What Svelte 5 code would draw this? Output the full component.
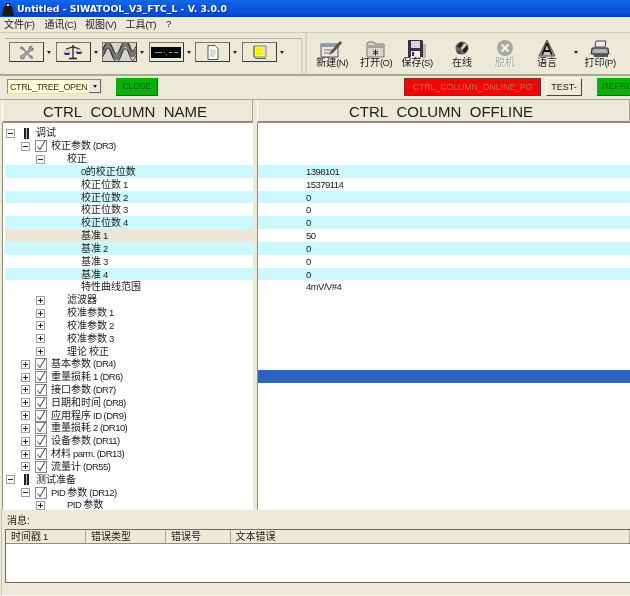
<script>
  // tree rows: l = indent level, t = twisty ("+", "-" or none), i = icon kind
  const rows = [
    { l: 0, t: "-", i: "bars", text: "调试" },
    { l: 1, t: "-", i: "check", text: "校正参数 (DR3)" },
    { l: 2, t: "-", text: "校正" },
    { l: 3, text: "0的校正位数", val: "1398101", c: 1 },
    { l: 3, text: "校正位数 1", val: "15379114" },
    { l: 3, text: "校正位数 2", val: "0", c: 1 },
    { l: 3, text: "校正位数 3", val: "0" },
    { l: 3, text: "校正位数 4", val: "0", c: 1 },
    { l: 3, text: "基准 1", val: "50", sel: 1 },
    { l: 3, text: "基准 2", val: "0", c: 1 },
    { l: 3, text: "基准 3", val: "0" },
    { l: 3, text: "基准 4", val: "0", c: 1 },
    { l: 3, text: "特性曲线范围", val: "4mV/V#4" },
    { l: 2, t: "+", text: "滤波器" },
    { l: 2, t: "+", text: "校准参数 1" },
    { l: 2, t: "+", text: "校准参数 2" },
    { l: 2, t: "+", text: "校准参数 3" },
    { l: 2, t: "+", text: "理论 校正" },
    { l: 1, t: "+", i: "check", text: "基本参数 (DR4)" },
    { l: 1, t: "+", i: "check", text: "重量损耗 1 (DR6)", hi: 1 },
    { l: 1, t: "+", i: "check", text: "接口参数 (DR7)" },
    { l: 1, t: "+", i: "check", text: "日期和时间 (DR8)" },
    { l: 1, t: "+", i: "check", text: "应用程序 ID (DR9)" },
    { l: 1, t: "+", i: "check", text: "重量损耗 2 (DR10)" },
    { l: 1, t: "+", i: "check", text: "设备参数 (DR11)" },
    { l: 1, t: "+", i: "check", text: "材料 parm. (DR13)" },
    { l: 1, t: "+", i: "check", text: "流量计 (DR55)" },
    { l: 0, t: "-", i: "bars", text: "测试准备" },
    { l: 1, t: "-", i: "check", text: "PID 参数 (DR12)" },
    { l: 2, t: "+", text: "PID 参数" },
  ];
  const menus = ["文件(F)", "通讯(C)", "视图(V)", "工具(T)", "?"];
  const leftTools = ["tools", "scale", "wave", "display", "doc", "note"];
  const cols = ["时间戳 1", "错误类型", "错误号", "文本错误"];

  // latin runs are set narrower than the CJK around them
  const parts = (s) => s.split(/([\x00-\x7f]+)/).filter(Boolean);
  const isLatin = (p) => /^[\x00-\x7f]/.test(p);
</script>

{#snippet txt(s)}
  {#each parts(s) as p}<span class:lat={isLatin(p)}>{p}</span>{/each}
{/snippet}

<div class="win">
  <div class="title">
    <svg class="appicon" width="12" height="14" viewBox="0 0 12 14">
      <path d="M4 1h4v3h2l2 10H0L2 4h2z" fill="#1a1a1a" />
      <rect x="5" y="2" width="2" height="2" fill="#ddd" />
    </svg>
    <span>Untitled - SIWATOOL_V3_FTC_L - V. 3.0.0</span>
  </div>

  <div class="menu">
    {#each menus as m}<div class="mi">{@render txt(m)}</div>{/each}
  </div>

  <div class="toolbar">
    <div class="leftband">
      {#each leftTools as k}
        <div class="tool">
          <div class="tbtn">
            {#if k === "tools"}
              <svg width="16" height="15" viewBox="0 0 18 16">
                <path d="M3 1l3 3v2l5 5 2 0 3 3-2 1-3-3v-2L6 5H4L1 3z" fill="#8a8a8a" stroke="#666" stroke-width=".6" />
                <path d="M15 1l-3 .5-.5 3L4 11a2.200 2.200 0 1 0 2 2l7-7 2.500-.5.500-2.500-2 1-1.200-1z" fill="#aaa" stroke="#555" stroke-width=".8" />
              </svg>
            {:else if k === "scale"}
              <svg width="18" height="17" viewBox="0 0 18 17">
                <path d="M9 1v13M5 14.500h8M2 5l7-2 7 2" fill="none" stroke="#222" stroke-width="1.300" />
                <path d="M0 9h6L3 5zM12 8h6l-3-4z" fill="none" stroke="#888" stroke-width=".6" />
                <path d="M0 9h6l-1 2H1zM12 8h6l-1 2h-4z" fill="#1c22b8" />
              </svg>
            {:else if k === "wave"}
              <svg width="35" height="20" viewBox="0 0 35 20">
                <rect width="35" height="20" fill="#d8d5ca" />
                <path d="M0 12c4-14 7-11 10-2s6 8 9-1 6-11 9-2 4 7 7 1" fill="none" stroke="#777" stroke-width="5" />
                <path d="M0 8c4-13 7-10 10-2s6 8 9-1 6-9 9-1 4 6 7 0M0 15c4-13 7-10 10-1s6 9 9 0 6-10 9-1 4 7 7 1" fill="none" stroke="#222" stroke-width="1" />
              </svg>
            {:else if k === "display"}
              <svg width="30" height="11" viewBox="0 0 30 11">
                <rect width="30" height="11" fill="#050505" />
                <path d="M4 5.500h7M13 5.500h1M18 5.500h3M23 5.500h4M15 8h1" stroke="#8b9a8b" stroke-width="1" />
              </svg>
            {:else if k === "doc"}
              <svg width="12" height="15" viewBox="0 0 12 15">
                <path d="M1 .5h7l3 3v11H1z" fill="#fbfbf6" stroke="#555" />
                <path d="M3 5h5M3 7h6M3 9h6M3 11h4" stroke="#aaa" stroke-width=".8" />
              </svg>
            {:else}
              <svg width="15" height="14" viewBox="0 0 15 14">
                <path d="M2 1h12v11H2z" fill="#f4f27a" stroke="#8d8a50" />
                <path d="M2 1v11l2 1.500h10" fill="none" stroke="#6b684a" />
                <rect x="4" y="3" width="6" height="7" fill="#f2f000" />
                <rect x="11" y="2" width="2" height="9" fill="#ddd" />
              </svg>
            {/if}
          </div>
          <i class="arrow"></i>
        </div>
      {/each}
    </div>

    <div class="rightband">
      <div class="big new">
        <svg width="24" height="20" viewBox="0 0 24 20">
          <rect x="1" y="4" width="17" height="13" fill="#e8e8e0" stroke="#555" />
          <rect x="1" y="4" width="17" height="3" fill="#8f9aa8" />
          <path d="M4 10h8M4 13h6" stroke="#777" />
          <path d="M9 15l2-4 9-10 2 2-9 10z" fill="#555" />
        </svg>
        <span>{@render txt("新建(N)")}</span>
      </div>
      <div class="big open">
        <svg width="22" height="20" viewBox="0 0 22 20">
          <path d="M2 4l1-2h6l1 2h9v13H2z" fill="#d7d5cc" stroke="#777" />
          <rect x="2" y="5" width="17" height="3" fill="#a7a59d" />
          <path d="M10.500 9.500v6M8 11l5 3M13 11l-5 3" stroke="#222" />
        </svg>
        <span>{@render txt("打开(O)")}</span>
      </div>
      <div class="big save">
        <svg width="20" height="20" viewBox="0 0 20 20">
          <rect x="6" y="4" width="13" height="14" fill="#b9b8b0" />
          <path d="M1 0h14l1 1v16H1z" fill="#32324a" />
          <rect x="4" y="1" width="9" height="7" fill="#d5d5da" />
          <rect x="4" y="11" width="9" height="6" fill="#eee" />
          <rect x="5" y="12" width="2" height="4" fill="#333" />
        </svg>
        <span>{@render txt("保存(S)")}</span>
      </div>
      <div class="big online">
        <svg width="16" height="20" viewBox="0 0 16 20">
          <circle cx="8" cy="8" r="6.500" fill="#666" />
          <path d="M3 6l4-4 2 1-1 3-3 2zM9 9l4-3 1 3-3 4-2-1z" fill="#222" />
          <path d="M7 8l3-4 3-1-2 4-3 3z" fill="#d8d8d8" />
          <path d="M2 11l4 0 1 3-3 0z" fill="#444" />
        </svg>
        <span>在线</span>
      </div>
      <div class="big off disabled">
        <svg width="18" height="20" viewBox="0 0 18 20">
          <circle cx="9" cy="8" r="8" fill="#a8a8a2" />
          <path d="M5.500 4.500l7 7M12.500 4.500l-7 7" stroke="#f4f4f0" stroke-width="2.200" />
        </svg>
        <span>脱机</span>
      </div>
      <div class="big lang">
        <svg width="18" height="20" viewBox="0 0 18 20">
          <path d="M9 0L17 16H1z" fill="#c4c3bb" stroke="#444" />
          <path d="M9 3l-5 12M9 3l5 12M5.500 11h7" stroke="#111" stroke-width="1.800" fill="none" />
        </svg>
        <span>语言</span>
      </div>
      <i class="arrow langarrow"></i>
      <div class="big print">
        <svg width="20" height="20" viewBox="0 0 20 20">
          <path d="M6 1h10l-1 6H5z" fill="#eee" stroke="#444" />
          <path d="M2 8h16l1 6H1z" fill="#8c8c8c" stroke="#333" />
          <path d="M3 14h15v3H4z" fill="#555" />
          <path d="M4 10h12M3 12h14" stroke="#ddd" />
        </svg>
        <span>{@render txt("打印(P)")}</span>
      </div>
    </div>
  </div>

  <div class="ctrl">
    <div class="combo"><span>CTRL_TREE_OPEN</span><b><i class="arrow"></i></b></div>
    <div class="cbtn green close">CLOSE</div>
    <div class="cbtn red">CTRL_COLUMN_ONLINE_PO</div>
    <div class="cbtn test">TEST-</div>
    <div class="cbtn green refresh">REFRESH</div>
  </div>

  <div class="panes">
    <div class="col left">
      <div class="head">CTRL&nbsp; COLUMN&nbsp; NAME</div>
      <div class="body">
        {#each rows as r}
          <div class="row l{r.l}" class:cyan={r.c} class:sel={r.sel}>
            {#if r.t}
              <span class="twisty" class:plus={r.t === "+"}></span>
            {/if}
            {#if r.i === "bars"}
              <span class="bars"></span>
            {:else if r.i === "check"}
              <svg class="check" width="12" height="12" viewBox="0 0 12 12">
                <rect x=".5" y=".5" width="11" height="11" fill="#fff" stroke="#8a8a8a" />
                <path d="M2.500 6.500l2.500 3L10.500 0" fill="none" stroke="#555" stroke-width="1.100" />
              </svg>
            {/if}
            <span class="lbl">{@render txt(r.text)}</span>
          </div>
        {/each}
      </div>
    </div>
    <div class="col right">
      <div class="head">CTRL&nbsp; COLUMN&nbsp; OFFLINE</div>
      <div class="body">
        {#each rows as r}
          <div class="row" class:cyan={r.c} class:hi={r.hi}><span class="val lat">{r.val ?? ""}</span></div>
        {/each}
      </div>
    </div>
  </div>

  <div class="msgs">
    <div class="msglabel">消息:</div>
    <div class="table">
      <div class="thead">
        {#each cols as c}<div class="th">{@render txt(c)}</div>{/each}
      </div>
    </div>
  </div>
</div>

<style>
  :global(body) {
    margin: 0;
    background: #ece9d8;
  }
  .win {
    width: 630px;
    height: 596px;
    overflow: hidden;
    display: flex;
    flex-direction: column;
    background: #ece9d8;
    color: #1a1a1a;
    font: 10px "Liberation Sans", "Noto Sans CJK SC", sans-serif;
    filter: blur(0.3px);
  }
  .lat {
    font-size: 9.500px;
    letter-spacing: -0.550px;
  }
  .title {
    height: 17px;
    flex: none;
    display: flex;
    align-items: center;
    gap: 3px;
    padding-left: 2px;
    background: linear-gradient(#1768e6, #0a5ae2 30%, #0a52da 70%, #0340c4);
    color: #fff;
    font: bold 9.300px "DejaVu Sans", sans-serif;
    text-shadow: 1px 1px 0 #0a2f90;
  }
  .menu {
    height: 16px;
    flex: none;
    box-sizing: border-box;
    display: flex;
    align-items: center;
    gap: 10px;
    padding: 0 0 2px 4px;
    border-bottom: 1px solid #cfccbc;
  }
  .mi {
    width: 30.500px;
    flex: none;
    white-space: nowrap;
  }
  .toolbar {
    height: 43px;
    flex: none;
    box-sizing: border-box;
    display: flex;
    border-bottom: 2px solid #a9a797;
  }
  .leftband {
    width: 298px;
    flex: none;
    margin: 5px 0 0 5px;
    padding: 3px 0 0 4px;
    display: flex;
    border-top: 1px solid #b8b6a6;
    border-right: 2px solid #d8d5c6;
    box-sizing: border-box;
    height: 36px;
  }
  .tool {
    width: 46.500px;
    flex: none;
    display: flex;
    align-items: center;
    align-self: flex-start;
    gap: 3px;
  }
  .tbtn {
    width: 35px;
    height: 20px;
    flex: none;
    box-sizing: border-box;
    display: flex;
    align-items: center;
    justify-content: center;
    overflow: hidden;
    border: 1px solid #3a3a32;
    border-left-color: #77756a;
    border-top-color: #77756a;
  }
  .arrow {
    display: block;
    width: 0;
    height: 0;
    border: 2.500px solid transparent;
    border-top: 3px solid #222;
    border-bottom: 0;
  }
  .rightband {
    flex: 1;
    display: flex;
    align-items: flex-start;
    margin-left: 2px;
    padding-top: 7px;
    border-left: 2px solid #d8d5c6;
  }
  .big {
    display: flex;
    flex-direction: column;
    align-items: center;
    flex: none;
    line-height: 10px;
    white-space: nowrap;
  }
  .big svg {
    display: block;
    margin-bottom: -2.500px;
  }
  .new {
    width: 34px;
    margin-left: 8px;
  }
  .open {
    width: 34px;
    margin-left: 10px;
  }
  .save {
    width: 34px;
    margin-left: 7px;
  }
  .online {
    width: 30px;
    margin-left: 13px;
  }
  .off {
    width: 30px;
    margin-left: 13px;
  }
  .disabled span {
    color: #a9a89e;
    text-shadow: 1px 1px 0 #fff;
  }
  .lang {
    width: 30px;
    margin-left: 12px;
  }
  .langarrow {
    margin: 11px 0 0 12px;
  }
  .print {
    width: 34px;
    margin-left: 5px;
  }
  .ctrl {
    height: 24px;
    flex: none;
    display: flex;
    align-items: center;
    border-bottom: 1px solid #a9a797;
    padding: 0 0 2px 7px;
    box-sizing: border-box;
  }
  .combo {
    width: 95px;
    height: 15px;
    flex: none;
    box-sizing: border-box;
    display: flex;
    align-items: center;
    justify-content: space-between;
    padding-left: 2px;
    background: #ffffd9;
    border: 1px solid #8d8b7e;
    border-right-color: #ddd;
    border-bottom-color: #ddd;
    font-size: 9px;
    letter-spacing: -0.400px;
    color: #333;
  }
  .combo b {
    width: 12px;
    height: 13px;
    display: flex;
    align-items: center;
    justify-content: center;
    background: #ece9d8;
    border-right: 1px solid #666;
    border-bottom: 1px solid #666;
    box-sizing: border-box;
  }
  .cbtn {
    height: 18px;
    flex: none;
    box-sizing: border-box;
    display: flex;
    align-items: center;
    justify-content: center;
    white-space: nowrap;
    overflow: hidden;
    font-size: 9px;
    border-right: 1px solid #444;
    border-bottom: 1px solid #444;
  }
  .green {
    background: #0ab00a;
    color: #0a6a0a;
  }
  .close {
    width: 42px;
    margin-left: 14px;
    letter-spacing: -0.400px;
  }
  .red {
    width: 137px;
    margin-left: 246px;
    background: #f00606;
    color: #c8685c;
    font-size: 8.700px;
    border-left: 1px solid #8a2a20;
    border-top: 1px solid #8a2a20;
  }
  .test {
    width: 36px;
    margin-left: 5px;
    border-top: 1px solid #fff;
    border-left: 1px solid #fff;
  }
  .refresh {
    width: 50px;
    margin-left: 15px;
    justify-content: flex-start;
    padding-left: 5px;
  }
  .panes {
    height: 410px;
    flex: none;
    display: flex;
    padding-left: 2px;
  }
  .col {
    display: flex;
    flex-direction: column;
    min-width: 0;
  }
  .left {
    width: 251px;
    flex: none;
  }
  .right {
    flex: 1;
    margin-left: 4px;
  }
  .head {
    height: 23px;
    flex: none;
    box-sizing: border-box;
    display: flex;
    align-items: center;
    justify-content: center;
    padding: 2px 5px 0 0;
    font-size: 15px;
    color: #222;
    white-space: nowrap;
    border-bottom: 2px solid #8f8d7f;
    border-left: 1px solid #fff;
    border-right: 1px solid #a9a797;
  }
  .body {
    flex: 1;
    overflow: hidden;
    background: #fff;
    padding-top: 3.500px;
    border-left: 1px solid #8f8d7f;
  }
  .left .body {
    padding-left: 2px;
  }
  .row {
    height: 12.830px;
    box-sizing: border-box;
    padding-top: 1px;
    display: flex;
    align-items: center;
    white-space: nowrap;
    line-height: 12px;
  }
  .cyan {
    background: #ccf9ff;
  }
  .sel {
    background: #ebe6d8;
  }
  .hi {
    background: #2d63bf;
  }
  .val {
    margin-left: 48px;
  }
  .l0 {
    padding-left: 1px;
  }
  .l1 {
    padding-left: 16px;
  }
  .l2 {
    padding-left: 31px;
  }
  .l3 {
    padding-left: 76px;
  }
  .twisty {
    width: 9px;
    height: 9px;
    flex: none;
    box-sizing: border-box;
    border: 1px solid #a0a0a0;
    background: linear-gradient(#222, #222) center / 5px 1px no-repeat, #fff;
  }
  .twisty.plus {
    background: linear-gradient(#222, #222) center / 5px 1px no-repeat,
      linear-gradient(#222, #222) center / 1px 5px no-repeat, #fff;
  }
  .bars {
    width: 5px;
    height: 11px;
    flex: none;
    margin: 0 7px 0 9px;
    background: repeating-linear-gradient(90deg, #222 0 2px, #bbb 2px 3px);
  }
  .check {
    flex: none;
    margin: 0 4px 0 5px;
  }
  .l2 .twisty + .lbl {
    margin-left: 22px;
  }
  .msgs {
    flex: 1;
    display: flex;
    flex-direction: column;
    box-sizing: border-box;
    border-left: 1px solid #c4c2b2;
    border-bottom: 1px solid #f6f5ec;
    margin-left: 1px;
  }
  .msglabel {
    height: 19px;
    flex: none;
    display: flex;
    align-items: center;
    padding-left: 5px;
  }
  .table {
    height: 54px;
    flex: none;
    margin-left: 3px;
    box-sizing: border-box;
    background: #fff;
    border: 1px solid #6f6d60;
    border-right: 0;
  }
  .thead {
    height: 13px;
    display: flex;
    background: #ece9d8;
    border-bottom: 1px solid #8f8d7f;
  }
  .th {
    width: 80px;
    flex: none;
    box-sizing: border-box;
    padding-left: 5px;
    line-height: 13px;
    border-right: 1px solid #a9a797;
    white-space: nowrap;
  }
  .th:nth-child(3) {
    width: 64.500px;
  }
  .th:last-child {
    flex: 1;
  }
</style>
